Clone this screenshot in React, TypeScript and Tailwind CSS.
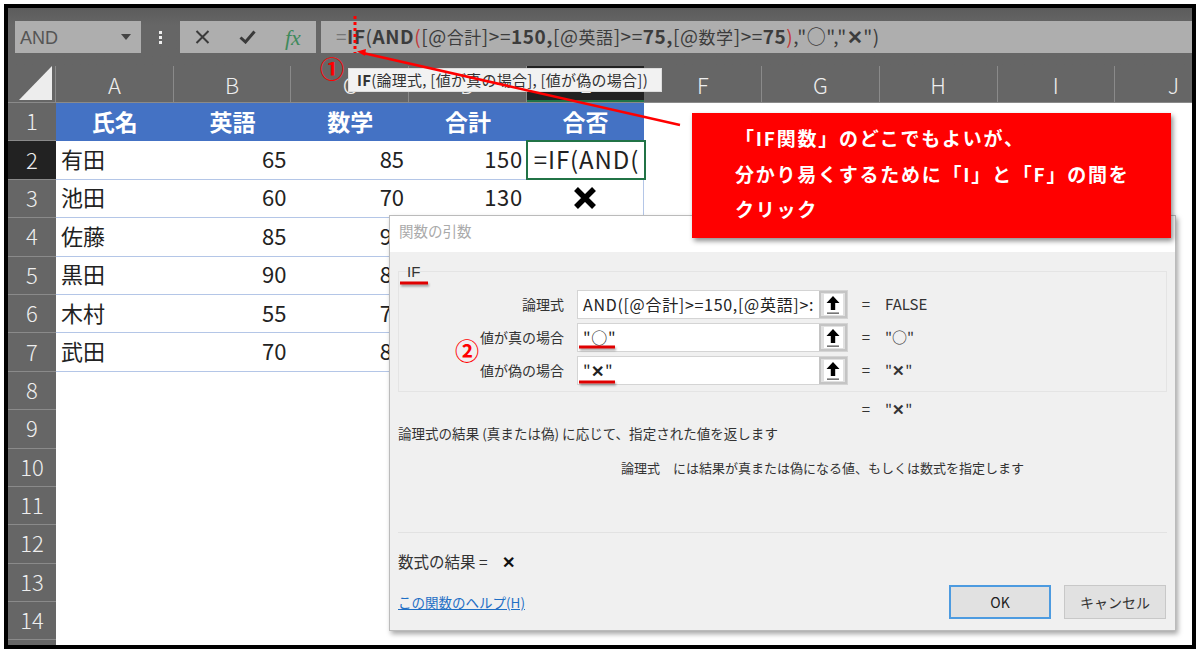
const JP = "font-['Noto_Sans_CJK_JP','Noto_Sans',sans-serif]";

const COLS = ["A", "B", "C", "D", "E", "F", "G", "H", "I", "J"];
const DATA: [string, string, string, string, string][] = [
  ["有田", "65", "85", "150", ""],
  ["池田", "60", "70", "130", "✖"],
  ["佐藤", "85", "90", "175", "○"],
  ["黒田", "90", "85", "175", "○"],
  ["木村", "55", "70", "125", "✖"],
  ["武田", "70", "85", "155", "✖"],
];

function UpBtn() {
  return (
    <div className="w-[28px] h-full bg-[#e1e1e1] border-2 border-[#c4c4c4] flex items-center justify-center">
      <div className="w-[19px] h-[21px] bg-white flex items-center justify-center">
        <svg width="16" height="20" viewBox="0 0 16 20">
          <path d="M8 1 L14.5 8 H10.2 V15 H5.8 V8 H1.5 Z" fill="#000" />
          <rect x="2" y="17.5" width="12" height="1.3" fill="#555" />
        </svg>
      </div>
    </div>
  );
}

function ArgRow({ label, value, result, first }: { label: string; value: React.ReactNode; result: React.ReactNode; first?: boolean }) {
  return (
    <div className={`flex items-center h-[29px] ${first ? "" : "mt-[4px]"}`}>
      <div className="w-[165px] text-right text-[14px] text-[#333]">{label}</div>
      <div className="ml-[13px] w-[271px] h-full flex border border-[#d4d4d4] bg-white">
        <div className="flex-1 pl-[5px] text-[16px] tracking-[0.7px] leading-[27px] text-[#222] overflow-hidden whitespace-nowrap">{value}</div>
        <UpBtn />
      </div>
      <div className="ml-[6px] w-[24px] text-[15px] text-[#333] text-center">=</div>
      <div className="ml-[7px] text-[15px] text-[#333]">{result}</div>
    </div>
  );
}

function Cjk({ children }: { children: React.ReactNode }) {
  return <span className="text-[17px] font-normal">{children}</span>;
}

export default function App() {
  return (
    <div className={`w-[1200px] h-[656px] bg-white pt-[4px] pl-[4px] pr-[4px] pb-[7px] ${JP}`}>
      <div className="relative w-full h-full border-4 border-black overflow-hidden bg-white">
        <div className="flex flex-col w-full h-full">
          {/* toolbar */}
          <div className="h-[58px] shrink-0 bg-[#666] pt-[13px] pb-[13px] pl-[7px] flex bg-gradient-to-b from-[#5c5c5c] to-[#666] to-[30%]">
            <div className="w-[126px] h-[32px] bg-[#aeaeae] flex items-center pl-[5px] pr-[9px] justify-between">
              <span className="text-[18px] pt-[3px] text-[#555] font-['Liberation_Sans',sans-serif]">AND</span>
              <svg width="12" height="6" viewBox="0 0 12 6"><path d="M1 0 H11 L6 6 Z" fill="#444" /></svg>
            </div>
            <div className="w-[39px] flex flex-col items-center justify-center gap-[2px]">
              <div className="w-[3px] h-[3px] bg-[#eee]" />
              <div className="w-[3px] h-[3px] bg-[#eee]" />
              <div className="w-[3px] h-[3px] bg-[#eee]" />
            </div>
            <div className="w-[136px] h-[32px] bg-[#aeaeae] flex items-center pl-[15px] gap-[29px]">
              <svg width="15" height="14" viewBox="0 0 15 14"><path d="M1.5 1 L13.5 13 M13.5 1 L1.5 13" stroke="#3a3a3a" strokeWidth="2" fill="none" /></svg>
              <svg width="17" height="14" viewBox="0 0 17 14"><path d="M1.5 7.5 L6.5 12 L15.5 1.5" stroke="#3a3a3a" strokeWidth="3" fill="none" /></svg>
              <span className="text-[22px] italic text-[#3f8a5c] font-['Liberation_Serif',serif]">fx</span>
            </div>
            <div className="ml-[5px] flex-1 h-[32px] bg-[#aeaeae] pl-[15px] text-[19px] tracking-[0.55px] leading-[29px] text-[#3c3c3c] whitespace-nowrap">
              <span className="text-[#777]">=</span>
              <b>IF</b>(<b>AND</b><span className="text-[#c23a3a]">(</span>[@<Cjk>合計</Cjk>]&gt;=<b>150,</b>[@<Cjk>英語</Cjk>]&gt;=<b>75,</b>[@<Cjk>数学</Cjk>]&gt;=<b>75</b><span className="text-[#c23a3a]">)</span>,"○","<b>✕</b>")
            </div>
          </div>
          {/* column header */}
          <div className="h-[37px] shrink-0 flex bg-[#666] border-b border-[#8a8a8a]">
            <div className="w-[48px] relative shrink-0 border-r border-[#8a8a8a]">
              <svg className="absolute right-[2px] bottom-[2px]" width="34" height="34" viewBox="0 0 34 34"><path d="M33 0 V34 H0 Z" fill="#ededed" /></svg>
            </div>
            {COLS.map((c) => (
              <div key={c} className={`w-[117.7px] shrink-0 flex items-center justify-center text-[22px] font-light text-[#eee] ${c === "E" ? "bg-[#222] border-b-2 border-[#217346]" : "border-r border-[#8a8a8a]"}`}>
                {c}
              </div>
            ))}
          </div>
          {/* rows */}
          <div className="flex-1 overflow-hidden">
            {Array.from({ length: 15 }, (_, i) => {
              const row = i + 1;
              const d = row >= 2 && row <= 7 ? DATA[row - 2] : null;
              return (
                <div key={row} className="h-[38.4px] flex">
                  <div className={`w-[48px] shrink-0 flex items-center justify-center text-[22px] pb-[2px] font-light text-[#eee] border-b border-[#8a8a8a] ${row === 2 ? "bg-[#222]" : "bg-[#666]"}`}>
                    {row < 15 ? row : ""}
                  </div>
                  {row === 1 &&
                    ["氏名", "英語", "数学", "合計", "合否"].map((t) => (
                      <div key={t} className="w-[117.7px] shrink-0 bg-[#4472c4] flex items-center justify-center pb-[2px] text-[23px] font-bold text-white">{t}</div>
                    ))}
                  {d && (
                    <>
                      <div className="w-[117.7px] shrink-0 border-b border-[#b4c6e7] pl-[5px] pb-[3px] flex items-center text-[22px] text-[#222]">{d[0]}</div>
                      <div className="w-[117.7px] shrink-0 border-b border-[#b4c6e7] pr-[5px] pb-[3px] flex items-center justify-end text-[22px] text-[#222]">{d[1]}</div>
                      <div className="w-[117.7px] shrink-0 border-b border-[#b4c6e7] pr-[5px] pb-[3px] flex items-center justify-end text-[22px] text-[#222]">{d[2]}</div>
                      <div className="w-[117.7px] shrink-0 border-b border-[#b4c6e7] pr-[4px] pb-[3px] flex items-center justify-end text-[22px] tracking-[0.6px] text-[#222]">{d[3]}</div>
                      {row === 2 ? (
                        <div className="w-[120px] -ml-[1px] shrink-0 h-[40px] -mt-[1px] border-2 border-[#217346] pl-[6px] pb-[2px] flex items-center text-[24px] tracking-[0.9px] text-[#222] whitespace-nowrap overflow-hidden bg-white">=IF(AND(</div>
                      ) : (
                        <div className="w-[117.7px] shrink-0 border-b border-r border-[#b4c6e7] flex items-center justify-center">
                          {d[4] === "✖" ? (
                            <svg width="24" height="24" viewBox="0 0 24 24"><path d="M3 3 L21 21 M21 3 L3 21" stroke="#000" strokeWidth="5.5" fill="none" /></svg>
                          ) : (
                            <span className="text-[22px] text-[#222]">{d[4]}</span>
                          )}
                        </div>
                      )}
                    </>
                  )}
                </div>
              );
            })}
          </div>
        </div>

        {/* tooltip */}
        <div className="absolute left-[340px] top-[60px] h-[24px] w-[314px] bg-[#f2f2f2] border border-[#ddd] pl-[8px] text-[15px] tracking-[0.25px] leading-[21px] text-[#333] whitespace-nowrap">
          <b>IF</b>(論理式, [値が真の場合], [値が偽の場合])
        </div>

        {/* dialog */}
        <div className="absolute left-[381px] top-[207px] w-[787px] h-[416px] bg-[#f0f0f0] border border-[#bbb] shadow-[2px_3px_5px_rgba(0,0,0,0.35)] flex flex-col">
          <div className="h-[36px] shrink-0 bg-white pl-[9px] pt-[4px] text-[14.5px] text-[#aaa]">関数の引数</div>
          <div className="relative mx-[8px] mt-[19px] h-[121px] border border-[#e4e4e4] pb-[2px] pt-[18px] shrink-0">
            <div className="absolute left-[8px] -top-[9px] text-[15px] leading-[18px] text-[#333] font-['Liberation_Sans',sans-serif]">IF</div>
            <ArgRow first label="論理式" value="AND([@合計]>=150,[@英語]>:" result="FALSE" />
            <ArgRow label="値が真の場合" value={'"○"'} result={'"○"'} />
            <ArgRow label="値が偽の場合" value={<span>"<b>✕</b>"</span>} result={<span>"<b>✕</b>"</span>} />
          </div>
          <div className="shrink-0 flex h-[24px] mt-[5px] items-center">
            <div className="ml-[464px] w-[24px] text-[15px] text-[#333] text-center">=</div>
            <div className="ml-[7px] text-[15px] text-[#333]">"<b>✕</b>"</div>
          </div>
          <div className="shrink-0 ml-[8px] mt-[2px] text-[13.5px] tracking-[0.03px] leading-[20px] text-[#333]">論理式の結果 (真または偽) に応じて、指定された値を返します</div>
          <div className="shrink-0 ml-[231px] mt-[15px] text-[13px] leading-[20px] text-[#333]">論理式　には結果が真または偽になる値、もしくは数式を指定します</div>
          <div className="shrink-0 mx-[8px] mt-[54px] border-t border-[#e2e2e2]" />
          <div className="shrink-0 ml-[8px] mt-[18px] text-[15.5px] leading-[20px] text-[#333] flex items-center">
            数式の結果 =<span className="ml-[14px] font-bold text-[#111]">✕</span>
          </div>
          <div className="shrink-0 mx-[8px] mt-[14px] flex items-center">
            <span className="text-[13.5px] text-[#1f6fc5] underline">この関数のヘルプ(H)</span>
            <div className="ml-auto flex gap-[13px] mr-[1px]">
              <div className="w-[102px] h-[34px] bg-[#e1e1e1] border-2 border-[#4d9be0] flex items-center justify-center text-[14px] text-[#222]">OK</div>
              <div className="w-[102px] h-[34px] bg-[#e1e1e1] border border-[#c8c8c8] flex items-center justify-center text-[14px] text-[#333]">キャンセル</div>
            </div>
          </div>
        </div>

        {/* callout */}
        <div className="absolute left-[684px] top-[105px] w-[479px] h-[125px] bg-[#ff0000] shadow-[2px_3px_5px_rgba(0,0,0,0.45)] pl-[43px] pt-[7px] text-[19px] tracking-[1.75px] font-bold leading-[35.5px] text-white">
          <div>「IF関数」のどこでもよいが、</div>
          <div>分かり易くするために「I」と「F」の間を</div>
          <div>クリック</div>
        </div>

        {/* annotations */}
        <svg className="absolute left-0 top-0" width="1182" height="637" viewBox="0 0 1182 637">
          <path d="M672 117 L355 45" stroke="#ff0000" strokeWidth="2.5" fill="none" />
          <path d="M349 43.5 L358 41 L357 48 Z" fill="#ff0000" />
          <path d="M347 8 V45" stroke="#ff0000" strokeWidth="3" strokeDasharray="3 3" fill="none" />
          <path d="M392 275 H420 M571 339 H607 M571 374 H607" stroke="#e00000" strokeWidth="3" fill="none" className="drop-shadow-[1px_2px_1px_rgba(0,0,0,0.35)]" />
        </svg>
        <span className="absolute left-[312px] top-[44px] text-[24px] font-bold leading-[32px] text-[#ff0000]">①</span>
        <span className="absolute left-[447px] top-[326px] text-[24px] font-bold leading-[32px] text-[#ff0000]">②</span>
      </div>
    </div>
  );
}
